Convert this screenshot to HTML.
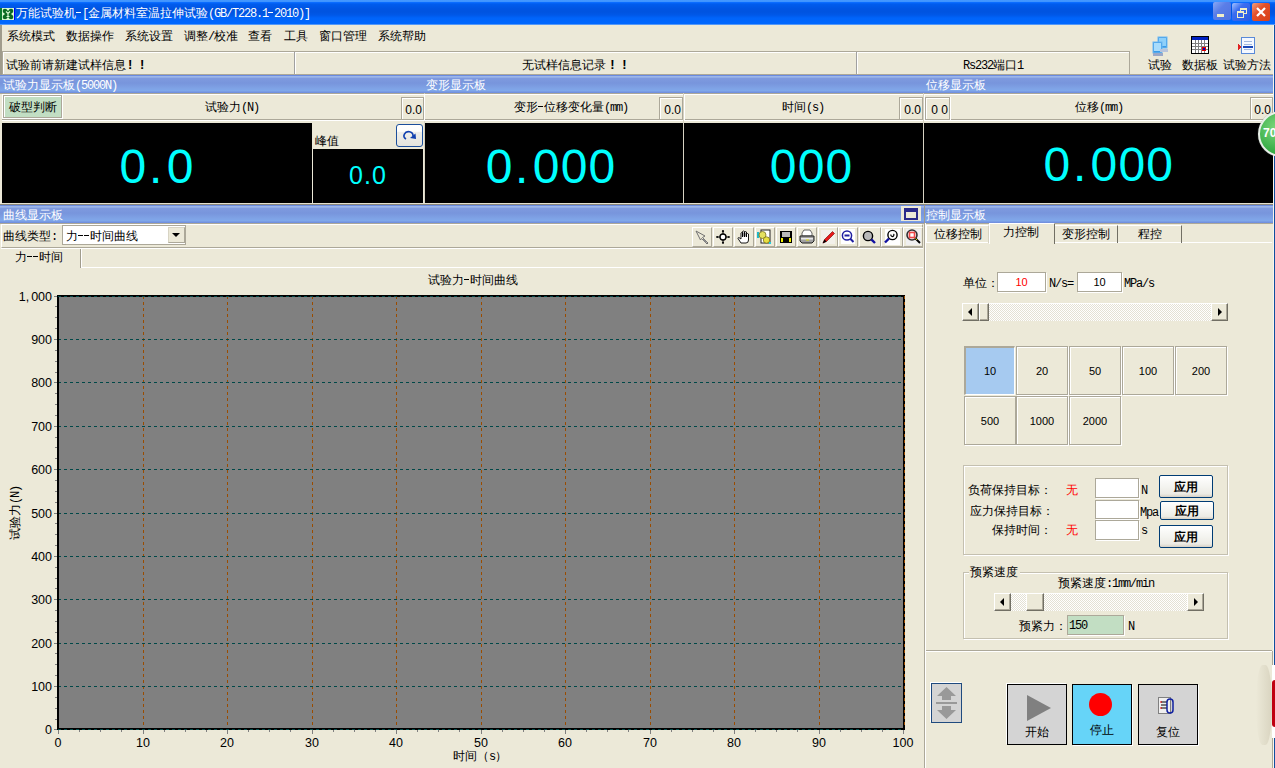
<!DOCTYPE html>
<html><head><meta charset="utf-8"><style>*{margin:0;padding:0;box-sizing:border-box}
html,body{width:1275px;height:768px;overflow:hidden;background:#ECE9D8;font-family:"Liberation Sans",sans-serif;font-size:12px;color:#000}
.a{position:absolute}
.t{position:absolute;white-space:nowrap;line-height:12px;font-size:12px}
.m{font-family:"Liberation Mono",monospace;font-size:12px;letter-spacing:-1.2px}
.ax{position:absolute;white-space:nowrap;line-height:12px;font-size:11px}
.lb{position:absolute;white-space:nowrap;line-height:12px;font-size:12.5px}
.d9{position:absolute;white-space:nowrap;line-height:12px}
.ex{display:inline-block;width:12px;font-weight:bold;font-size:13px;text-indent:2px}
.d1{display:inline-block;width:5px;margin-right:1px;height:1px;background:currentColor;vertical-align:top;margin-top:5px;letter-spacing:0}
.dig{position:absolute;color:#00FFFF;line-height:1;white-space:nowrap}
</style></head><body>
<div class="a" style="left:0px;top:0px;width:1275px;height:25px;background:linear-gradient(#4498FF 0,#3F94FF 1.5px,#0A6CFF 2.5px,#005CEE 4px,#0054E2 9px,#0054E0 12px,#0058E8 15px,#0064FA 18px,#0068FF 24px,#A8C8F0 25px)"></div>
<div class="a" style="left:0px;top:8px;width:2px;height:12px;background:#0B7A2B"></div>
<div class="a" style="left:2px;top:8px;width:12px;height:12px;background:#D8F8D0"></div>
<svg class="a" style="left:2px;top:8px" width="12" height="12" viewBox="0 0 12 12"><circle cx="3" cy="3" r="2.3" fill="#0A6A20"/><circle cx="9" cy="3" r="2.3" fill="#0A6A20"/><circle cx="3" cy="9" r="2.3" fill="#0A6A20"/><circle cx="9" cy="9" r="2.3" fill="#0A6A20"/><rect x="2.5" y="2.5" width="7" height="7" fill="#0A6A20"/><path d="M4 3.5 L6 5.5 L8 3.5 M6 5.5 V9 M4.5 8.5 H7.5" stroke="#D8F8D0" stroke-width="1.2" fill="none"/></svg>
<div class="a" style="left:14px;top:8px;width:1px;height:12px;background:#0000FF"></div>
<div class="t" style="left:16px;top:7px;color:#fff">万能试验机<span class="m"><span class="d1"></span>[</span>金属材料室温拉伸试验<span class="m">(GB/T228.1<span class="d1"></span>2010)]</span></div>
<div class="a" style="left:1213px;top:2px;width:18px;height:18px;background:linear-gradient(135deg,#8AA8F4,#5A7EE8 40%,#4F72E0);border-radius:2px"></div>
<div class="a" style="left:1217px;top:14px;width:7px;height:3px;background:#F3EFC7"></div>
<div class="a" style="left:1232px;top:3px;width:18px;height:18px;background:linear-gradient(135deg,#A8C4FF,#3C6EF0 35%,#2A5AE0);border-radius:2px"></div>
<div class="a" style="left:1240px;top:8px;width:7px;height:6px;border:1px solid #F3EFC7;border-top-width:2px"></div>
<div class="a" style="left:1237px;top:11px;width:7px;height:7px;border:1px solid #F3EFC7;border-top-width:2px;background:#3A68E8"></div>
<div class="a" style="left:1252px;top:3px;width:18px;height:18px;background:linear-gradient(135deg,#F0A080,#E2502B 40%,#D84018);border-radius:2px"></div>
<svg class="a" style="left:1252px;top:3px" width="18" height="18"><path d="M5 5L13 13M13 5L5 13" stroke="#fff" stroke-width="2.2"/></svg>
<div class="a" style="left:1273px;top:25px;width:1px;height:743px;background:#F8F6EE"></div>
<div class="a" style="left:1274px;top:25px;width:1px;height:743px;background:#0E4E9E"></div>
<div class="a" style="left:0px;top:25px;width:2px;height:50px;background:#A09C8C"></div>
<div class="t" style="left:7px;top:30px;">系统模式</div>
<div class="t" style="left:66px;top:30px;">数据操作</div>
<div class="t" style="left:125px;top:30px;">系统设置</div>
<div class="t" style="left:184px;top:30px;">调整<span class="m">/</span>校准</div>
<div class="t" style="left:248px;top:30px;">查看</div>
<div class="t" style="left:284px;top:30px;">工具</div>
<div class="t" style="left:319px;top:30px;">窗口管理</div>
<div class="t" style="left:378px;top:30px;">系统帮助</div>
<div class="a" style="left:2px;top:51px;width:1127px;height:1px;background:#ACA899"></div>
<div class="a" style="left:3px;top:52px;width:1126px;height:1px;background:#fff"></div>
<div class="a" style="left:2px;top:74px;width:1271px;height:1px;background:#ACA899"></div>
<div class="a" style="left:2px;top:51px;width:1px;height:23px;background:#ACA899"></div>
<div class="a" style="left:3px;top:52px;width:1px;height:22px;background:#fff"></div>
<div class="a" style="left:294px;top:52px;width:1px;height:22px;background:#A0A0A0"></div>
<div class="a" style="left:295px;top:52px;width:1px;height:22px;background:#fff"></div>
<div class="a" style="left:856px;top:52px;width:1px;height:22px;background:#A0A0A0"></div>
<div class="a" style="left:857px;top:52px;width:1px;height:22px;background:#fff"></div>
<div class="a" style="left:1129px;top:51px;width:1px;height:23px;background:#ACA899"></div>
<div class="t" style="left:6px;top:59px;">试验前请新建试样信息<span class="ex">!</span><span class="ex">!</span></div>
<div class="t" style="left:295px;top:59px;width:561px;text-align:center;">无试样信息记录<span class="ex">!</span><span class="ex">!</span></div>
<div class="t" style="left:857px;top:59px;width:272px;text-align:center;"><span class="m">Rs232</span>端口<span class="m">1</span></div>
<div class="t" style="left:1148px;top:59px;">试验</div>
<div class="t" style="left:1182px;top:59px;">数据板</div>
<div class="t" style="left:1223px;top:59px;">试验方法</div>
<svg class="a" style="left:1150px;top:36px" width="20" height="22" viewBox="0 0 20 22">
<rect x="8" y="1" width="9" height="11" fill="#3A9BE8" stroke="#6FB8F0"/><rect x="9" y="2" width="7" height="8" fill="#8ED0FA"/>
<rect x="3" y="6" width="9" height="11" fill="#3A9BE8" stroke="#6FB8F0"/><rect x="4" y="7" width="7" height="8" fill="#A8DCFC"/>
<rect x="3" y="17" width="10" height="3" fill="#9AA8C8"/><rect x="10" y="13" width="8" height="3" fill="#B8C4DC"/></svg>
<svg class="a" style="left:1191px;top:36px" width="18" height="18" viewBox="0 0 18 18" shape-rendering="crispEdges">
<rect x="0.5" y="0.5" width="17" height="17" fill="#fff" stroke="#000"/><rect x="1" y="1" width="16" height="3" fill="#0020C0"/>
<path d="M1 7.5h16M1 10.5h16M1 13.5h16M4.5 4v13M7.5 4v13M10.5 4v13M13.5 4v13" stroke="#808080"/>
<rect x="11" y="11" width="4" height="4" fill="#E00000"/><rect x="12" y="12" width="2" height="2" fill="#0000C0"/></svg>
<svg class="a" style="left:1237px;top:36px" width="20" height="20" viewBox="0 0 20 20" shape-rendering="crispEdges">
<rect x="4.5" y="1.5" width="13" height="16" fill="#F4F8FF" stroke="#5A8AD8"/><path d="M7 5.5h8M7 8.5h8M7 13.5h8" stroke="#A0B8E0"/>
<rect x="6" y="10" width="10" height="2" fill="#1848B8"/><path d="M1 8l3 3-3 3z" fill="#E02020"/></svg>
<div class="a" style="left:0px;top:75px;width:1273px;height:18px;background:linear-gradient(#6A8BE0 0,#6A8BE0 1px,#9CB6EA 1px,#9CB6EA 2px,#7E9ADF 3.5px,#7895DC 45%,#7FA3E6 75%,#80A8EA 88%,#7596E2 94%,#6E8CDC 100%)"></div>
<div class="t" style="left:3px;top:79px;color:#fff">试验力显示板<span class="m">(5000N)</span></div>
<div class="t" style="left:426px;top:79px;color:#fff">变形显示板</div>
<div class="t" style="left:926px;top:79px;color:#fff">位移显示板</div>
<div class="a" style="left:0px;top:93px;width:1273px;height:1px;background:#ACA899"></div>
<div class="a" style="left:2px;top:94px;width:1271px;height:1px;background:#fff"></div>
<div class="a" style="left:2px;top:119px;width:1271px;height:1px;background:#ACA899"></div>
<div class="a" style="left:2px;top:120px;width:1271px;height:1px;background:#fff"></div>
<div class="a" style="left:424px;top:93px;width:1px;height:110px;background:#D6D2C2"></div>
<div class="a" style="left:683px;top:93px;width:1px;height:110px;background:#D6D2C2"></div>
<div class="a" style="left:923px;top:93px;width:1px;height:110px;background:#D6D2C2"></div>
<div class="a" style="left:424px;top:94px;width:1px;height:27px;background:#fff"></div>
<div class="a" style="left:684px;top:94px;width:1px;height:27px;background:#fff"></div>
<div class="a" style="left:924px;top:94px;width:1px;height:27px;background:#fff"></div>
<div class="a" style="left:2px;top:94px;width:61px;height:25px;background:#fff"></div>
<div class="a" style="left:3px;top:95px;width:59px;height:23px;background:#C2DEC3;border:1px solid #ACA899;box-shadow:inset 1px 1px 0 #fff"></div>
<div class="t" style="left:9px;top:101px;">破型判断</div>
<div class="t" style="left:205px;top:101px;">试验力<span class="m">(N)</span></div>
<div class="a" style="left:401px;top:97px;width:23px;height:23px;border-left:1px solid #ACA899;border-top:1px solid #ACA899;border-right:1px solid #ACA899"></div>
<div class="a" style="left:402px;top:98px;width:21px;height:21px;border-left:1px solid #fff;border-top:1px solid #fff"></div>
<div class="d9" style="left:401px;top:104px;width:21px;text-align:right;font-family:'Liberation Sans',sans-serif;font-size:12px;letter-spacing:0px">0.0</div>
<div class="t" style="left:514px;top:101px;">变形<span class="m"><span class="d1"></span></span>位移变化量<span class="m">(mm)</span></div>
<div class="a" style="left:659px;top:97px;width:24px;height:23px;border-left:1px solid #ACA899;border-top:1px solid #ACA899;border-right:1px solid #ACA899"></div>
<div class="a" style="left:660px;top:98px;width:22px;height:21px;border-left:1px solid #fff;border-top:1px solid #fff"></div>
<div class="d9" style="left:659px;top:104px;width:22px;text-align:right;font-family:'Liberation Sans',sans-serif;font-size:12px;letter-spacing:0px">0.0</div>
<div class="t" style="left:782px;top:101px;">时间<span class="m">(s)</span></div>
<div class="a" style="left:899px;top:97px;width:24px;height:23px;border-left:1px solid #ACA899;border-top:1px solid #ACA899;border-right:1px solid #ACA899"></div>
<div class="a" style="left:900px;top:98px;width:22px;height:21px;border-left:1px solid #fff;border-top:1px solid #fff"></div>
<div class="d9" style="left:899px;top:104px;width:22px;text-align:right;font-family:'Liberation Sans',sans-serif;font-size:12px;letter-spacing:0px">0.0</div>
<div class="a" style="left:925px;top:97px;width:25px;height:23px;border-left:1px solid #ACA899;border-top:1px solid #ACA899;border-right:1px solid #ACA899"></div>
<div class="a" style="left:926px;top:98px;width:23px;height:21px;border-left:1px solid #fff;border-top:1px solid #fff"></div>
<div class="d9" style="left:925px;top:104px;width:23px;text-align:right;font-family:'Liberation Sans',sans-serif;font-size:12px;letter-spacing:0px">0&nbsp;0</div>
<div class="a" style="left:950px;top:97px;width:1px;height:23px;background:#fff"></div>
<div class="t" style="left:1075px;top:101px;">位移<span class="m">(mm)</span></div>
<div class="a" style="left:1250px;top:97px;width:23px;height:23px;border-left:1px solid #ACA899;border-top:1px solid #ACA899;border-right:1px solid #ACA899"></div>
<div class="a" style="left:1251px;top:98px;width:21px;height:21px;border-left:1px solid #fff;border-top:1px solid #fff"></div>
<div class="d9" style="left:1250px;top:104px;width:21px;text-align:right;font-family:'Liberation Sans',sans-serif;font-size:12px;letter-spacing:0px">0.0</div>
<div class="a" style="left:2px;top:123px;width:310px;height:80px;background:#000"></div>
<div class="t" style="left:315px;top:135px;">峰值</div>
<div class="a" style="left:396px;top:124px;width:27px;height:23px;border:1px solid #1C4F9C;border-radius:3px;background:linear-gradient(#fff 0,#FDFDFB 30%,#EEEEEA 35%,#E4E4DE 100%)"></div>
<svg class="a" style="left:400px;top:127px" width="20" height="18" viewBox="0 0 20 18"><path d="M6 12 A4.5 4 0 1 1 13 9" fill="none" stroke="#1040B0" stroke-width="1.6"/><path d="M10 11L15.5 6.5L16 12Z" fill="#1040B0"/></svg>
<div class="a" style="left:313px;top:149px;width:110px;height:54px;background:#000"></div>
<div class="a" style="left:425px;top:123px;width:258px;height:80px;background:#000"></div>
<div class="a" style="left:684px;top:123px;width:239px;height:80px;background:#000"></div>
<div class="a" style="left:924px;top:123px;width:349px;height:80px;background:#000"></div>
<div class="dig" style="left:119.6px;top:143px;font-size:48px;letter-spacing:1.2px">0<span style="margin:0 3.1px 0 1.5px">.</span>0</div>
<div class="dig" style="left:348.9px;top:162.5px;font-size:25px;letter-spacing:1.1px">0.0</div>
<div class="dig" style="left:485.7px;top:143px;font-size:48px;letter-spacing:1.2px">0<span style="margin:0 3.1px 0 1.5px">.</span>000</div>
<div class="dig" style="left:769.8px;top:143px;font-size:48px;letter-spacing:1.2px">000</div>
<div class="dig" style="left:1043.5px;top:141px;font-size:48px;letter-spacing:1.2px">0<span style="margin:0 3.1px 0 1.5px">.</span>000</div>
<div class="a" style="left:1258px;top:111px;width:46px;height:46px;border-radius:50%;background:radial-gradient(circle at 40% 35%,#7ED87E,#3CB04A 60%,#2A9A38);border:2px solid #E8F0E8;box-shadow:0 0 1px #888"></div>
<div class="ax" style="left:1263px;top:127px;color:#fff;font-weight:bold;font-size:12px">70</div>
<div class="a" style="left:2px;top:203px;width:1271px;height:1px;background:#E4E0D0"></div>
<div class="a" style="left:0px;top:204px;width:1273px;height:1px;background:#8A877A"></div>
<div class="a" style="left:0px;top:205px;width:1273px;height:18px;background:linear-gradient(#6A8BE0 0,#6A8BE0 1px,#9CB6EA 1px,#9CB6EA 2px,#7E9ADF 3.5px,#7895DC 45%,#7FA3E6 75%,#80A8EA 88%,#7596E2 94%,#6E8CDC 100%)"></div>
<div class="t" style="left:3px;top:209px;color:#fff">曲线显示板</div>
<div class="t" style="left:926px;top:209px;color:#fff">控制显示板</div>
<div class="a" style="left:901px;top:206px;width:20px;height:15px;background:#ECE9D8"></div>
<div class="a" style="left:904px;top:208px;width:14px;height:12px;border:2px solid #2A2A8A;border-top-width:4px;border-bottom-width:2px;background:#ECE9D8"></div>
<div class="a" style="left:924px;top:205px;width:1px;height:18px;background:#A09C8C"></div>
<div class="a" style="left:0px;top:223px;width:924px;height:545px;background:#ECE9D8"></div>
<div class="a" style="left:0px;top:223px;width:1273px;height:1px;background:#ACA899"></div>
<div class="a" style="left:1px;top:224px;width:922px;height:24px;border:1px solid;border-color:#fff #ACA899 #ACA899 #fff"></div>
<div class="a" style="left:1px;top:248px;width:922px;height:1px;background:#fff"></div>
<div class="t" style="left:3px;top:230px;">曲线类型<span class="m">:</span></div>
<div class="a" style="left:62px;top:225px;width:124px;height:20px;background:#fff;border:1px solid #ACA899"></div>
<div class="t" style="left:66px;top:230px;">力<span class="m"><span class="d1"></span><span class="d1"></span></span>时间曲线</div>
<div class="a" style="left:168px;top:227px;width:17px;height:16px;background:#ECE9D8;border:1px solid;border-color:#D8D4C4 #ACA899 #ACA899 #D8D4C4"></div>
<div class="a" style="left:172px;top:233px;width:0;height:0;border-left:4px solid transparent;border-right:4px solid transparent;border-top:4px solid #000"></div>
<div class="a" style="left:692px;top:227px;width:20px;height:20px;border:1px solid;border-color:#fff #ACA899 #ACA899 #fff"></div>
<div class="a" style="left:713px;top:227px;width:20px;height:20px;border:1px solid;border-color:#fff #ACA899 #ACA899 #fff"></div>
<div class="a" style="left:734px;top:227px;width:20px;height:20px;border:1px solid;border-color:#fff #ACA899 #ACA899 #fff"></div>
<div class="a" style="left:755px;top:227px;width:20px;height:20px;border:1px solid;border-color:#fff #ACA899 #ACA899 #fff"></div>
<div class="a" style="left:776px;top:227px;width:20px;height:20px;border:1px solid;border-color:#fff #ACA899 #ACA899 #fff"></div>
<div class="a" style="left:797px;top:227px;width:20px;height:20px;border:1px solid;border-color:#fff #ACA899 #ACA899 #fff"></div>
<div class="a" style="left:818px;top:227px;width:20px;height:20px;border:1px solid;border-color:#fff #ACA899 #ACA899 #fff"></div>
<div class="a" style="left:838px;top:227px;width:20px;height:20px;border:1px solid;border-color:#fff #ACA899 #ACA899 #fff"></div>
<div class="a" style="left:859px;top:227px;width:22px;height:20px;border:1px solid;border-color:#fff #ACA899 #ACA899 #fff"></div>
<div class="a" style="left:881px;top:227px;width:22px;height:20px;border:1px solid;border-color:#fff #ACA899 #ACA899 #fff"></div>
<div class="a" style="left:903px;top:227px;width:20px;height:20px;border:1px solid;border-color:#fff #ACA899 #ACA899 #fff"></div>
<svg class="a" style="left:693px;top:228px" width="18" height="18" viewBox="0 0 18 18"><path d="M3 3 L12 8 L9.5 9.5 L15 15 L14 16 L8.5 10.5 L7.5 12 Z" fill="#ECE9D8" stroke="#707070" stroke-width="1"/><path d="M10 11 L13.5 14.5" stroke="#909090" stroke-width="1.5"/></svg>
<svg class="a" style="left:714px;top:228px" width="18" height="18" viewBox="0 0 18 18"><circle cx="9" cy="9" r="3" fill="#fff" stroke="#000" stroke-width="1.4"/><circle cx="9" cy="3.2" r="1.1" fill="#000"/><circle cx="9" cy="14.8" r="1.1" fill="#000"/><circle cx="3.2" cy="9" r="1.1" fill="#000"/><circle cx="14.8" cy="9" r="1.1" fill="#000"/><path d="M9 4v2M9 12v2M4 9h2M12 9h2" stroke="#000" stroke-width="1"/></svg>
<svg class="a" style="left:735px;top:228px" width="18" height="18" viewBox="0 0 18 18"><path d="M6 15 L3 10.5 Q3 9.5 4 9.6 L6 11 V5 Q6.5 4 7.5 5 V9 V3.5 Q8.5 2.5 9.5 3.5 V9 V4 Q10.5 3 11.5 4 V9 V6 Q12.5 5 13.5 6 V12 Q13.5 15 11 15 Z" fill="#fff" stroke="#000" stroke-width="0.9"/><path d="M8.5 4.5v4M10.5 4.5v4" stroke="#808080" stroke-width=".8"/></svg>
<svg class="a" style="left:756px;top:228px" width="18" height="18" viewBox="0 0 18 18"><rect x="5" y="2" width="9" height="13" fill="#fff" stroke="#222"/><rect x="1" y="4" width="2" height="6" fill="#20B8C8"/><circle cx="6.5" cy="7" r="3.5" fill="#E4E060" stroke="#7A7020" stroke-width=".8"/><circle cx="10.5" cy="12" r="3.2" fill="#E8E040" stroke="#7A7020" stroke-width=".8"/><rect x="13" y="14" width="2" height="2" fill="#20D0E0"/></svg>
<svg class="a" style="left:777px;top:228px" width="18" height="18" viewBox="0 0 18 18"><rect x="3" y="3" width="12" height="12" fill="#000"/><rect x="5" y="4" width="8" height="5" fill="#B8B8B8"/><rect x="4" y="10" width="2" height="4" fill="#F0F000"/><rect x="12" y="10" width="2" height="4" fill="#F0F000"/><rect x="7" y="11" width="4" height="4" fill="#000"/></svg>
<svg class="a" style="left:798px;top:228px" width="18" height="18" viewBox="0 0 18 18"><path d="M6 2 H12 L14 5 V8 H4 V5 Z" fill="#fff" stroke="#404040" stroke-width=".8"/><path d="M2 8 H16 V13 L14 15 H4 L2 13 Z" fill="#A0A0A0" stroke="#202020" stroke-width="1"/><rect x="3" y="10" width="12" height="1.5" fill="#E8E8E8"/><rect x="8" y="11.5" width="3" height="1" fill="#E0E000"/></svg>
<svg class="a" style="left:819px;top:228px" width="18" height="18" viewBox="0 0 18 18"><rect x="2" y="2" width="14" height="14" fill="#F2F0EA"/><path d="M4 15 L5.5 11.5 L13.5 3.5 L15.5 5.5 L7.5 13.5 Z" fill="#E81818" stroke="#700000" stroke-width=".6"/><path d="M3.5 15.5 L5.5 11.5 L7.5 13.5 Z" fill="#000"/></svg>
<svg class="a" style="left:839px;top:228px" width="18" height="18" viewBox="0 0 18 18"><rect x="2" y="1" width="14" height="15" fill="#fff"/><circle cx="8" cy="7.5" r="4.6" fill="#fff" stroke="#2020A0" stroke-width="1.5"/><rect x="5.5" y="6.5" width="5" height="2" fill="#2020A0"/><path d="M11.3 10.8 L14.5 14" stroke="#2020A0" stroke-width="2"/></svg>
<svg class="a" style="left:860px;top:228px" width="18" height="18" viewBox="0 0 18 18"><circle cx="8" cy="8" r="4.6" fill="#B8B8B8" stroke="#000" stroke-width="1.4"/><path d="M11.3 11.3 L15 15" stroke="#1010A0" stroke-width="2.4"/></svg>
<svg class="a" style="left:882px;top:228px" width="18" height="18" viewBox="0 0 18 18"><rect x="3" y="1" width="15" height="16" fill="#fff"/><circle cx="10.5" cy="7" r="4.6" fill="#fff" stroke="#000" stroke-width="1.4"/><path d="M9 6.5 A1.5 1.5 0 1 0 11.5 6" fill="none" stroke="#000" stroke-width="1.2"/><path d="M7 10.5 L3 14.5" stroke="#1010A0" stroke-width="2.4"/></svg>
<svg class="a" style="left:904px;top:228px" width="18" height="18" viewBox="0 0 18 18"><rect x="2" y="1" width="15" height="16" fill="#F0F0F0"/><circle cx="8" cy="7" r="5" fill="#F0F0F0" stroke="#303030" stroke-width="1.6"/><rect x="5.5" y="4.5" width="5" height="5" fill="#fff" stroke="#F04848" stroke-width="1.6"/><path d="M11.5 10.5 L16 15" stroke="#000" stroke-width="2"/><path d="M11.5 10.5 L13 12" stroke="#E0E000" stroke-width="1"/></svg>
<div class="a" style="left:82px;top:267px;width:841px;height:1px;background:#fff"></div>
<div class="a" style="left:80px;top:249px;width:2px;height:19px;background:linear-gradient(90deg,#A09C8C 50%,#fff 50%)"></div>
<div class="t" style="left:15px;top:251px;">力<span class="m"><span class="d1"></span><span class="d1"></span></span>时间</div>
<div class="t" style="left:428px;top:274px;">试验力<span class="m"><span class="d1"></span></span>时间曲线</div>
<div class="t" style="left:9px;top:540px;transform:rotate(-90deg);transform-origin:left top;font-size:12px">试验力<span class="m">(N)</span></div>
<div class="t" style="left:453px;top:750px;">时间（<span class="m">s</span>）</div>
<svg class="a" style="left:0;top:0" width="1275" height="768" viewBox="0 0 1275 768" shape-rendering="crispEdges">
<rect x="59" y="297" width="844" height="431" fill="#808080"/>
<line x1="143.5" y1="296" x2="143.5" y2="728" stroke="#9A4C00" stroke-dasharray="3 3"/>
<line x1="227.5" y1="296" x2="227.5" y2="728" stroke="#9A4C00" stroke-dasharray="3 3"/>
<line x1="312.5" y1="296" x2="312.5" y2="728" stroke="#9A4C00" stroke-dasharray="3 3"/>
<line x1="396.5" y1="296" x2="396.5" y2="728" stroke="#9A4C00" stroke-dasharray="3 3"/>
<line x1="481.5" y1="296" x2="481.5" y2="728" stroke="#9A4C00" stroke-dasharray="3 3"/>
<line x1="565.5" y1="296" x2="565.5" y2="728" stroke="#9A4C00" stroke-dasharray="3 3"/>
<line x1="650.5" y1="296" x2="650.5" y2="728" stroke="#9A4C00" stroke-dasharray="3 3"/>
<line x1="734.5" y1="296" x2="734.5" y2="728" stroke="#9A4C00" stroke-dasharray="3 3"/>
<line x1="819.5" y1="296" x2="819.5" y2="728" stroke="#9A4C00" stroke-dasharray="3 3"/>
<line x1="58" y1="686.5" x2="903" y2="686.5" stroke="#004848" stroke-dasharray="3 3"/>
<line x1="58" y1="643.5" x2="903" y2="643.5" stroke="#004848" stroke-dasharray="3 3"/>
<line x1="58" y1="599.5" x2="903" y2="599.5" stroke="#004848" stroke-dasharray="3 3"/>
<line x1="58" y1="556.5" x2="903" y2="556.5" stroke="#004848" stroke-dasharray="3 3"/>
<line x1="58" y1="513.5" x2="903" y2="513.5" stroke="#004848" stroke-dasharray="3 3"/>
<line x1="58" y1="469.5" x2="903" y2="469.5" stroke="#004848" stroke-dasharray="3 3"/>
<line x1="58" y1="426.5" x2="903" y2="426.5" stroke="#004848" stroke-dasharray="3 3"/>
<line x1="58" y1="382.5" x2="903" y2="382.5" stroke="#004848" stroke-dasharray="3 3"/>
<line x1="58" y1="339.5" x2="903" y2="339.5" stroke="#004848" stroke-dasharray="3 3"/>
<rect x="57" y="295" width="848" height="2" fill="#000"/>
<rect x="57" y="728" width="848" height="2" fill="#000"/>
<rect x="57" y="295" width="2" height="435" fill="#000"/>
<rect x="903" y="295" width="2" height="435" fill="#000"/>
<line x1="58" y1="296.5" x2="903" y2="296.5" stroke="#004848" stroke-dasharray="3 3"/>
<line x1="58" y1="729.5" x2="903" y2="729.5" stroke="#004848" stroke-dasharray="3 3"/>
<line x1="904.5" y1="296" x2="904.5" y2="728" stroke="#9A4C00" stroke-dasharray="3 3"/>
<rect x="54" y="729" width="3" height="1" fill="#808080"/>
<rect x="55" y="719" width="2" height="1" fill="#808080"/>
<rect x="55" y="708" width="2" height="1" fill="#808080"/>
<rect x="55" y="697" width="2" height="1" fill="#808080"/>
<rect x="54" y="686" width="3" height="1" fill="#808080"/>
<rect x="55" y="675" width="2" height="1" fill="#808080"/>
<rect x="55" y="664" width="2" height="1" fill="#808080"/>
<rect x="55" y="653" width="2" height="1" fill="#808080"/>
<rect x="54" y="643" width="3" height="1" fill="#808080"/>
<rect x="55" y="632" width="2" height="1" fill="#808080"/>
<rect x="55" y="621" width="2" height="1" fill="#808080"/>
<rect x="55" y="610" width="2" height="1" fill="#808080"/>
<rect x="54" y="599" width="3" height="1" fill="#808080"/>
<rect x="55" y="588" width="2" height="1" fill="#808080"/>
<rect x="55" y="578" width="2" height="1" fill="#808080"/>
<rect x="55" y="567" width="2" height="1" fill="#808080"/>
<rect x="54" y="556" width="3" height="1" fill="#808080"/>
<rect x="55" y="545" width="2" height="1" fill="#808080"/>
<rect x="55" y="534" width="2" height="1" fill="#808080"/>
<rect x="55" y="523" width="2" height="1" fill="#808080"/>
<rect x="54" y="513" width="3" height="1" fill="#808080"/>
<rect x="55" y="502" width="2" height="1" fill="#808080"/>
<rect x="55" y="491" width="2" height="1" fill="#808080"/>
<rect x="55" y="480" width="2" height="1" fill="#808080"/>
<rect x="54" y="469" width="3" height="1" fill="#808080"/>
<rect x="55" y="458" width="2" height="1" fill="#808080"/>
<rect x="55" y="447" width="2" height="1" fill="#808080"/>
<rect x="55" y="437" width="2" height="1" fill="#808080"/>
<rect x="54" y="426" width="3" height="1" fill="#808080"/>
<rect x="55" y="415" width="2" height="1" fill="#808080"/>
<rect x="55" y="404" width="2" height="1" fill="#808080"/>
<rect x="55" y="393" width="2" height="1" fill="#808080"/>
<rect x="54" y="382" width="3" height="1" fill="#808080"/>
<rect x="55" y="372" width="2" height="1" fill="#808080"/>
<rect x="55" y="361" width="2" height="1" fill="#808080"/>
<rect x="55" y="350" width="2" height="1" fill="#808080"/>
<rect x="54" y="339" width="3" height="1" fill="#808080"/>
<rect x="55" y="328" width="2" height="1" fill="#808080"/>
<rect x="55" y="317" width="2" height="1" fill="#808080"/>
<rect x="55" y="306" width="2" height="1" fill="#808080"/>
<rect x="54" y="296" width="3" height="1" fill="#808080"/>
<rect x="58" y="730" width="1" height="4" fill="#808080"/>
<rect x="79" y="730" width="1" height="2" fill="#808080"/>
<rect x="100" y="730" width="1" height="2" fill="#808080"/>
<rect x="121" y="730" width="1" height="2" fill="#808080"/>
<rect x="143" y="730" width="1" height="4" fill="#808080"/>
<rect x="164" y="730" width="1" height="2" fill="#808080"/>
<rect x="185" y="730" width="1" height="2" fill="#808080"/>
<rect x="206" y="730" width="1" height="2" fill="#808080"/>
<rect x="227" y="730" width="1" height="4" fill="#808080"/>
<rect x="248" y="730" width="1" height="2" fill="#808080"/>
<rect x="269" y="730" width="1" height="2" fill="#808080"/>
<rect x="290" y="730" width="1" height="2" fill="#808080"/>
<rect x="312" y="730" width="1" height="4" fill="#808080"/>
<rect x="333" y="730" width="1" height="2" fill="#808080"/>
<rect x="354" y="730" width="1" height="2" fill="#808080"/>
<rect x="375" y="730" width="1" height="2" fill="#808080"/>
<rect x="396" y="730" width="1" height="4" fill="#808080"/>
<rect x="417" y="730" width="1" height="2" fill="#808080"/>
<rect x="438" y="730" width="1" height="2" fill="#808080"/>
<rect x="459" y="730" width="1" height="2" fill="#808080"/>
<rect x="481" y="730" width="1" height="4" fill="#808080"/>
<rect x="502" y="730" width="1" height="2" fill="#808080"/>
<rect x="523" y="730" width="1" height="2" fill="#808080"/>
<rect x="544" y="730" width="1" height="2" fill="#808080"/>
<rect x="565" y="730" width="1" height="4" fill="#808080"/>
<rect x="586" y="730" width="1" height="2" fill="#808080"/>
<rect x="607" y="730" width="1" height="2" fill="#808080"/>
<rect x="628" y="730" width="1" height="2" fill="#808080"/>
<rect x="650" y="730" width="1" height="4" fill="#808080"/>
<rect x="671" y="730" width="1" height="2" fill="#808080"/>
<rect x="692" y="730" width="1" height="2" fill="#808080"/>
<rect x="713" y="730" width="1" height="2" fill="#808080"/>
<rect x="734" y="730" width="1" height="4" fill="#808080"/>
<rect x="755" y="730" width="1" height="2" fill="#808080"/>
<rect x="776" y="730" width="1" height="2" fill="#808080"/>
<rect x="797" y="730" width="1" height="2" fill="#808080"/>
<rect x="819" y="730" width="1" height="4" fill="#808080"/>
<rect x="840" y="730" width="1" height="2" fill="#808080"/>
<rect x="861" y="730" width="1" height="2" fill="#808080"/>
<rect x="882" y="730" width="1" height="2" fill="#808080"/>
<rect x="903" y="730" width="1" height="4" fill="#808080"/>
</svg>
<div class="lb" style="left:0;top:724px;width:52px;text-align:right">0</div>
<div class="lb" style="left:0;top:681px;width:52px;text-align:right">100</div>
<div class="lb" style="left:0;top:638px;width:52px;text-align:right">200</div>
<div class="lb" style="left:0;top:594px;width:52px;text-align:right">300</div>
<div class="lb" style="left:0;top:551px;width:52px;text-align:right">400</div>
<div class="lb" style="left:0;top:508px;width:52px;text-align:right">500</div>
<div class="lb" style="left:0;top:464px;width:52px;text-align:right">600</div>
<div class="lb" style="left:0;top:421px;width:52px;text-align:right">700</div>
<div class="lb" style="left:0;top:377px;width:52px;text-align:right">800</div>
<div class="lb" style="left:0;top:334px;width:52px;text-align:right">900</div>
<div class="lb" style="left:0;top:291px;width:52px;text-align:right">1,<span style="margin-left:2px">000</span></div>
<div class="lb" style="left:28px;top:737px;width:60px;text-align:center">0</div>
<div class="lb" style="left:113px;top:737px;width:60px;text-align:center">10</div>
<div class="lb" style="left:197px;top:737px;width:60px;text-align:center">20</div>
<div class="lb" style="left:282px;top:737px;width:60px;text-align:center">30</div>
<div class="lb" style="left:366px;top:737px;width:60px;text-align:center">40</div>
<div class="lb" style="left:451px;top:737px;width:60px;text-align:center">50</div>
<div class="lb" style="left:535px;top:737px;width:60px;text-align:center">60</div>
<div class="lb" style="left:620px;top:737px;width:60px;text-align:center">70</div>
<div class="lb" style="left:704px;top:737px;width:60px;text-align:center">80</div>
<div class="lb" style="left:789px;top:737px;width:60px;text-align:center">90</div>
<div class="lb" style="left:873px;top:737px;width:60px;text-align:center">100</div>
<div class="a" style="left:924px;top:223px;width:1px;height:545px;background:#ACA899"></div>
<div class="a" style="left:925px;top:223px;width:1px;height:545px;background:#fff"></div>
<div class="a" style="left:1272px;top:651px;width:1px;height:117px;background:#ACA899"></div>
<div class="a" style="left:926px;top:242px;width:346px;height:1px;background:#fff"></div>
<div class="a" style="left:926px;top:225px;width:63px;height:18px;border-left:1px solid #fff;border-top:1px solid #fff;border-right:1px solid #D6D2C2"></div>
<div class="t" style="left:934px;top:228px;">位移控制</div>
<div class="a" style="left:989px;top:223px;width:66px;height:21px;background:#ECE9D8;border-left:1px solid #fff;border-top:1px solid #fff;border-right:1px solid #716F64"></div>
<div class="t" style="left:1003px;top:226px;">力控制</div>
<div class="a" style="left:1055px;top:225px;width:63px;height:18px;border-right:1px solid #716F64;border-top:1px solid #fff"></div>
<div class="t" style="left:1062px;top:228px;">变形控制</div>
<div class="a" style="left:1118px;top:225px;width:64px;height:18px;border-right:1px solid #716F64;border-top:1px solid #fff"></div>
<div class="t" style="left:1138px;top:228px;">程控</div>
<div class="t" style="left:963px;top:277px;">单位：</div>
<div class="a" style="left:997px;top:272px;width:49px;height:20px;background:#fff;border:1px solid #ACA899;box-shadow:1px 1px 0 #fff"></div>
<div class="ax" style="left:997px;top:276px;width:49px;text-align:center;color:#f00">10</div>
<div class="t" style="left:1049px;top:277px;"><span class="m">N/s=</span></div>
<div class="a" style="left:1077px;top:272px;width:45px;height:20px;background:#fff;border:1px solid #ACA899;box-shadow:1px 1px 0 #fff"></div>
<div class="ax" style="left:1077px;top:276px;width:45px;text-align:center;">10</div>
<div class="t" style="left:1124px;top:277px;"><span class="m">MPa/s</span></div>
<div class="a" style="left:962px;top:303px;width:266px;height:18px;background:repeating-conic-gradient(#fff 0 25%,#E4E1D4 0 50%) 0 0/2px 2px;border-top:1px solid #fff"></div>
<div class="a" style="left:962px;top:303px;width:17px;height:18px;background:#ECE9D8;border:1px solid;border-color:#fff #716F64 #716F64 #fff;box-shadow:inset -1px -1px 0 #ACA899"></div>
<div class="a" style="left:968px;top:308px;width:0;height:0;border-top:4px solid transparent;border-bottom:4px solid transparent;border-right:4px solid #000"></div>
<div class="a" style="left:1211px;top:303px;width:17px;height:18px;background:#ECE9D8;border:1px solid;border-color:#fff #716F64 #716F64 #fff;box-shadow:inset -1px -1px 0 #ACA899"></div>
<div class="a" style="left:1218px;top:308px;width:0;height:0;border-top:4px solid transparent;border-bottom:4px solid transparent;border-left:4px solid #000"></div>
<div class="a" style="left:979px;top:303px;width:10px;height:18px;background:#ECE9D8;border:1px solid;border-color:#fff #716F64 #716F64 #fff;box-shadow:inset -1px -1px 0 #ACA899"></div>
<div class="a" style="left:964px;top:346px;width:51px;height:49px;background:#A6CAF0;border-style:solid;border-color:#ACA899 #fff #fff #ACA899;border-width:2px 1px 1px 2px"></div>
<div class="ax" style="left:964px;top:365px;width:52px;text-align:center;">10</div>
<div class="a" style="left:1016px;top:346px;width:52px;height:49px;border:1px solid #ACA899;box-shadow:inset 1px 1px 0 #fff,1px 1px 0 #fff"></div>
<div class="ax" style="left:1016px;top:365px;width:52px;text-align:center;">20</div>
<div class="a" style="left:1069px;top:346px;width:52px;height:49px;border:1px solid #ACA899;box-shadow:inset 1px 1px 0 #fff,1px 1px 0 #fff"></div>
<div class="ax" style="left:1069px;top:365px;width:52px;text-align:center;">50</div>
<div class="a" style="left:1122px;top:346px;width:52px;height:49px;border:1px solid #ACA899;box-shadow:inset 1px 1px 0 #fff,1px 1px 0 #fff"></div>
<div class="ax" style="left:1122px;top:365px;width:52px;text-align:center;">100</div>
<div class="a" style="left:1175px;top:346px;width:52px;height:49px;border:1px solid #ACA899;box-shadow:inset 1px 1px 0 #fff,1px 1px 0 #fff"></div>
<div class="ax" style="left:1175px;top:365px;width:52px;text-align:center;">200</div>
<div class="a" style="left:964px;top:396px;width:52px;height:49px;border:1px solid #ACA899;box-shadow:inset 1px 1px 0 #fff,1px 1px 0 #fff"></div>
<div class="ax" style="left:964px;top:415px;width:52px;text-align:center;">500</div>
<div class="a" style="left:1016px;top:396px;width:52px;height:49px;border:1px solid #ACA899;box-shadow:inset 1px 1px 0 #fff,1px 1px 0 #fff"></div>
<div class="ax" style="left:1016px;top:415px;width:52px;text-align:center;">1000</div>
<div class="a" style="left:1069px;top:396px;width:52px;height:49px;border:1px solid #ACA899;box-shadow:inset 1px 1px 0 #fff,1px 1px 0 #fff"></div>
<div class="ax" style="left:1069px;top:415px;width:52px;text-align:center;">2000</div>
<div class="a" style="left:963px;top:465px;width:265px;height:90px;border:1px solid #C4C0B0;box-shadow:inset 1px 1px 0 #fff,1px 1px 0 #fff"></div>
<div class="t" style="left:968px;top:484px;">负荷保持目标：</div>
<div class="t" style="left:1066px;top:484px;color:#f00">无</div>
<div class="a" style="left:1095px;top:478px;width:44px;height:20px;background:#fff;border:1px solid #ACA899;box-shadow:1px 1px 0 #fff"></div>
<div class="t" style="left:1141px;top:484px;"><span class="m">N</span></div>
<div class="a" style="left:1159px;top:475px;width:54px;height:23px;border:1px solid #003C74;border-radius:2px;background:linear-gradient(#fff,#F4F4F0 50%,#ECEBE4 85%,#D6D0C5)"></div>
<div class="t" style="left:1159px;top:481px;width:54px;text-align:center;font-weight:bold">应用</div>
<div class="t" style="left:970px;top:505px;">应力保持目标：</div>
<div class="a" style="left:1095px;top:500px;width:44px;height:19px;background:#fff;border:1px solid #ACA899;box-shadow:1px 1px 0 #fff"></div>
<div class="t" style="left:1140px;top:506px;"><span class="m">Mpa</span></div>
<div class="a" style="left:1160px;top:501px;width:54px;height:19px;border:1px solid #003C74;border-radius:2px;background:linear-gradient(#fff,#F4F4F0 50%,#ECEBE4 85%,#D6D0C5)"></div>
<div class="t" style="left:1160px;top:505px;width:54px;text-align:center;font-weight:bold">应用</div>
<div class="t" style="left:992px;top:524px;">保持时间：</div>
<div class="t" style="left:1066px;top:524px;color:#f00">无</div>
<div class="a" style="left:1095px;top:520px;width:44px;height:20px;background:#fff;border:1px solid #ACA899;box-shadow:1px 1px 0 #fff"></div>
<div class="t" style="left:1141px;top:524px;"><span class="m">s</span></div>
<div class="a" style="left:1159px;top:525px;width:54px;height:23px;border:1px solid #003C74;border-radius:2px;background:linear-gradient(#fff,#F4F4F0 50%,#ECEBE4 85%,#D6D0C5)"></div>
<div class="t" style="left:1159px;top:531px;width:54px;text-align:center;font-weight:bold">应用</div>
<div class="a" style="left:963px;top:572px;width:265px;height:67px;border:1px solid #C4C0B0;box-shadow:inset 1px 1px 0 #fff,1px 1px 0 #fff"></div>
<div class="a" style="left:969px;top:566px;width:51px;height:12px;background:#ECE9D8"></div>
<div class="t" style="left:970px;top:566px;">预紧速度</div>
<div class="t" style="left:1058px;top:577px;">预紧速度<span class="m">:1mm/min</span></div>
<div class="a" style="left:994px;top:593px;width:210px;height:18px;background:repeating-conic-gradient(#fff 0 25%,#E4E1D4 0 50%) 0 0/2px 2px;border-top:1px solid #fff"></div>
<div class="a" style="left:994px;top:593px;width:17px;height:18px;background:#ECE9D8;border:1px solid;border-color:#fff #716F64 #716F64 #fff;box-shadow:inset -1px -1px 0 #ACA899"></div>
<div class="a" style="left:1000px;top:598px;width:0;height:0;border-top:4px solid transparent;border-bottom:4px solid transparent;border-right:4px solid #000"></div>
<div class="a" style="left:1187px;top:593px;width:17px;height:18px;background:#ECE9D8;border:1px solid;border-color:#fff #716F64 #716F64 #fff;box-shadow:inset -1px -1px 0 #ACA899"></div>
<div class="a" style="left:1194px;top:598px;width:0;height:0;border-top:4px solid transparent;border-bottom:4px solid transparent;border-left:4px solid #000"></div>
<div class="a" style="left:1026px;top:593px;width:18px;height:18px;background:#ECE9D8;border:1px solid;border-color:#fff #716F64 #716F64 #fff;box-shadow:inset -1px -1px 0 #ACA899"></div>
<div class="t" style="left:1019px;top:620px;">预紧力：</div>
<div class="a" style="left:1067px;top:615px;width:57px;height:20px;background:#C2DEC3;border:1px solid #ACA899;box-shadow:1px 1px 0 #fff"></div>
<div class="t" style="left:1069px;top:619px;"><span class="m">150</span></div>
<div class="t" style="left:1128px;top:620px;"><span class="m">N</span></div>
<div class="a" style="left:926px;top:650px;width:346px;height:1px;background:#ACA899"></div>
<div class="a" style="left:926px;top:651px;width:346px;height:1px;background:#fff"></div>
<div class="a" style="left:931px;top:683px;width:31px;height:40px;background:#D4D4D4;border:1px solid #1F4A7E;box-shadow:-1px -1px 0 #fff"></div>
<svg class="a" style="left:932px;top:684px" width="29" height="38" viewBox="0 0 29 38"><path d="M14.5 3 L24 12 H19 V16 H10 V12 H5Z" fill="#999"/><rect x="4" y="18" width="21" height="2" fill="#999"/><path d="M14.5 35 L24 26 H19 V22 H10 V26 H5Z" fill="#999"/></svg>
<div class="a" style="left:1007px;top:684px;width:60px;height:61px;background:#D4D4D4;border:1px solid #000;box-shadow:-1px -1px 0 #fff"></div>
<div class="a" style="left:1027px;top:695px;width:0;height:0;border-top:13px solid transparent;border-bottom:13px solid transparent;border-left:24px solid #808080"></div>
<div class="t" style="left:1007px;top:726px;width:60px;text-align:center;">开始</div>
<div class="a" style="left:1072px;top:684px;width:60px;height:61px;background:#66D4F8;border:1px solid #000;box-shadow:1px 1px 0 #fff"></div>
<div class="a" style="left:1089px;top:693px;width:23px;height:23px;border-radius:50%;background:#f00"></div>
<div class="t" style="left:1072px;top:724px;width:60px;text-align:center;">停止</div>
<div class="a" style="left:1138px;top:684px;width:60px;height:61px;background:#D4D4D4;border:1px solid #000;box-shadow:1px 1px 0 #fff"></div>
<svg class="a" style="left:1157px;top:696px" width="20" height="20" viewBox="0 0 20 20"><rect x="1.5" y="1.5" width="12" height="16" fill="#F0F0F0" stroke="#808080"/><path d="M4 6h6M4 9h6M4 12h6" stroke="#000"/><path d="M3 6h2M3 12h2" stroke="#E00000"/><path d="M13 3 Q10 3 10 6 V14 Q10 17 13 17 Q16 17 16 14 V6 Q16 3 13 3" fill="none" stroke="#1020A0" stroke-width="1.5"/></svg>
<div class="t" style="left:1138px;top:726px;width:60px;text-align:center;">复位</div>
<div class="a" style="left:1256px;top:665px;width:16px;height:80px;background:linear-gradient(90deg,rgba(160,150,120,0) 0,rgba(160,150,120,.25) 100%);border-radius:40%/50%"></div>
<div class="a" style="left:1272px;top:665px;width:3px;height:73px;background:#fff"></div>
<div class="a" style="left:1272px;top:680px;width:3px;height:47px;background:#C00010;border-radius:3px 0 0 3px"></div>
</body></html>
